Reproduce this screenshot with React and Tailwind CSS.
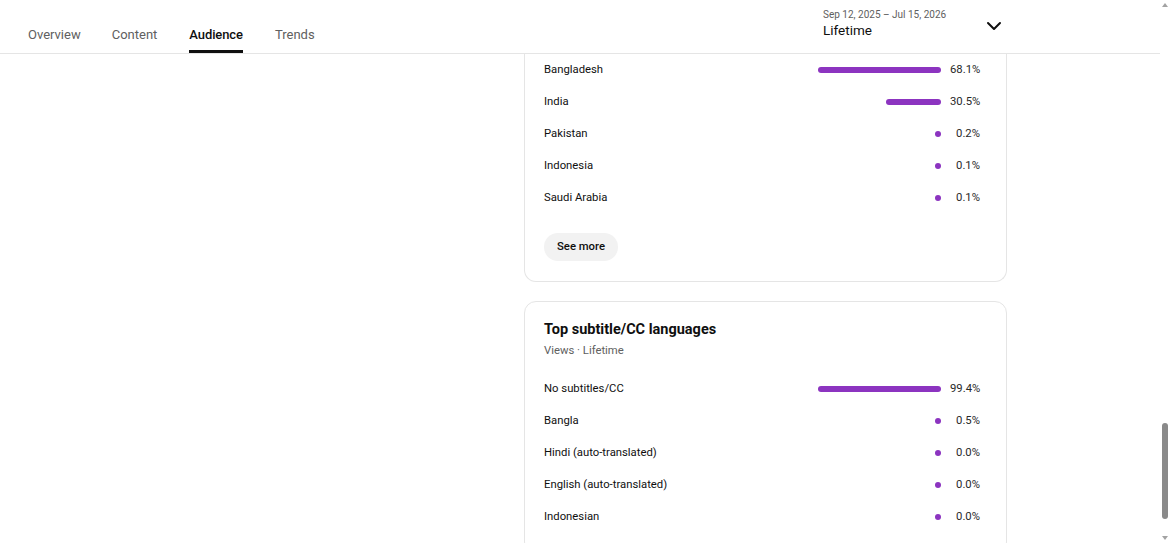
import React from 'react'
import { ChevronDown } from 'lucide-react'

const countries = [
  { name: 'Bangladesh', value: 68.1 },
  { name: 'India', value: 30.5 },
  { name: 'Pakistan', value: 0.2 },
  { name: 'Indonesia', value: 0.1 },
  { name: 'Saudi Arabia', value: 0.1 },
]

const languages = [
  { name: 'No subtitles/CC', value: 99.4 },
  { name: 'Bangla', value: 0.5 },
  { name: 'Hindi (auto-translated)', value: 0.0 },
  { name: 'English (auto-translated)', value: 0.0 },
  { name: 'Indonesian', value: 0.0 },
]

const tabs = ['Overview', 'Content', 'Audience', 'Trends']

function BarRow({ name, value, max }) {
  const width = Math.max(6, (value / max) * 123)
  return (
    <div className="flex items-center h-8">
      <div className="flex-1 text-[11.3px] text-[#0f0f0f]">{name}</div>
      <div className="w-[124px] flex justify-end">
        <div className="h-[6px] rounded-full bg-[#8c34c0]" style={{ width }} />
      </div>
      <div className="w-[30px] ml-[9px] text-right text-[11.3px] text-[#282828]">
        {value.toFixed(1)}%
      </div>
    </div>
  )
}

function Scrollbar() {
  return (
    <div className="w-[9px] shrink-0 h-full flex flex-col items-center bg-white">
      <div className="mt-[3px] w-0 h-0 border-l-[3px] border-r-[3px] border-b-[4px] border-l-transparent border-r-transparent border-b-[#a3a3a3]" />
      <div className="mt-[416px] w-[6px] h-[96px] rounded-full bg-[#8a8a8a]" />
      <div className="mt-auto mb-[3px] w-0 h-0 border-l-[3px] border-r-[3px] border-t-[4px] border-l-transparent border-r-transparent border-t-[#a3a3a3]" />
    </div>
  )
}

export default function App() {
  return (
    <div
      className="h-[543px] w-full flex overflow-hidden bg-white"
      style={{ fontFamily: 'Roboto, "Noto Sans", Arial, sans-serif' }}
    >
      <div className="flex-1 flex flex-col min-w-0">
        {/* header */}
        <div className="h-[54px] shrink-0 flex items-stretch border-b border-[#e5e5e5]">
          <div className="flex pl-[28px]">
            {tabs.map((t, i) => {
              const active = t === 'Audience'
              const gap = ['ml-0', 'ml-[31px]', 'ml-[32px]', 'ml-[32px]'][i]
              return (
                <div key={t} className={'flex flex-col justify-end ' + gap}>
                  <div
                    className={
                      'leading-[20px] text-[13px] ' +
                      (active ? 'text-[#0f0f0f] font-medium tracking-[-0.1px]' : 'text-[#606060]')
                    }
                  >
                    {t}
                  </div>
                  <div className={'mt-[5px] h-[3px] ' + (active ? 'bg-[#0f0f0f]' : 'bg-transparent')} />
                </div>
              )
            })}
          </div>
          <div className="ml-auto mr-[154px] flex items-center">
            <div className="w-[159px] flex flex-col -mt-[5px]">
              <div className="text-[10px] leading-[12px] text-[#606060]">Sep 12, 2025 – Jul 15, 2026</div>
              <div className="text-[13.5px] leading-[18px] text-[#0f0f0f]">Lifetime</div>
            </div>
            <ChevronDown size={24} strokeWidth={2} className="text-[#0f0f0f] -mt-[1px]" />
          </div>
        </div>

        {/* content */}
        <div className="flex-1 flex overflow-hidden">
          <div className="w-[524px] shrink-0" />
          <div className="w-[483px] shrink-0 flex flex-col gap-[19px]">
            <div className="border border-t-0 border-[#e5e5e5] rounded-b-[12px] pl-[19px] pr-[26px] pb-[20px]">
              <div>
                {countries.map((c) => (
                  <BarRow key={c.name} {...c} max={68.1} />
                ))}
              </div>
              <button className="mt-[19px] h-[28px] px-[13px] rounded-full bg-[#f2f2f2] text-[11.3px] font-medium text-[#0f0f0f]">
                See more
              </button>
            </div>

            <div className="border border-[#e5e5e5] rounded-[12px] pl-[19px] pr-[26px] pt-[19px] pb-[20px]">
              <div className="text-[14.5px] leading-[18px] font-bold text-[#0f0f0f]">Top subtitle/CC languages</div>
              <div className="mt-[4px] text-[11.3px] leading-[16px] text-[#606060]">Views · Lifetime</div>
              <div className="mt-[14px]">
                {languages.map((l) => (
                  <BarRow key={l.name} {...l} max={99.4} />
                ))}
              </div>
            </div>
          </div>
        </div>
      </div>
      <Scrollbar />
    </div>
  )
}
